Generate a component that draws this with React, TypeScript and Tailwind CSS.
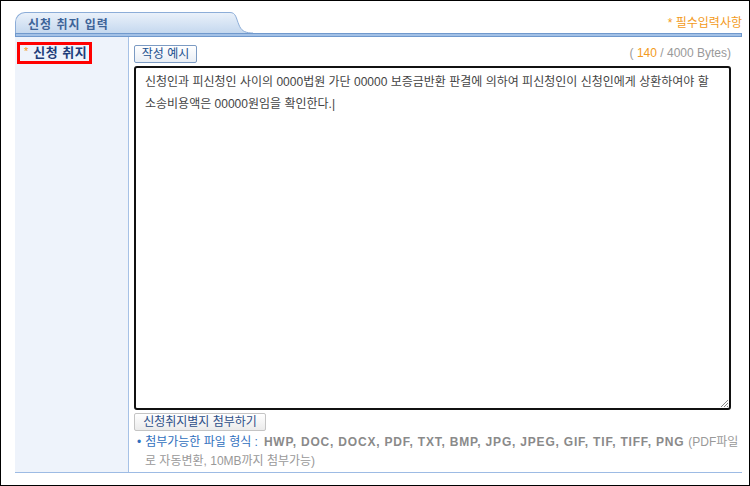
import React from "react";

const font = { fontFamily: '"Liberation Sans", "Noto Sans CJK KR", sans-serif' } as React.CSSProperties;

export default function App() {
  return (
    <div
      className="w-[750px] h-[486px] border border-black bg-white flex flex-col pl-[14px] pr-[7px] text-[12px]"
      style={font}
    >
      {/* header */}
      <div className="relative h-[36px] shrink-0">
        <div className="absolute left-0 top-[11px] flex">
          <div className="w-[208px] h-[22px] rounded-tl-[10px] border-t border-l border-[#8cadd8] bg-gradient-to-b from-[#eaf1fa] to-[#c3d7ee] flex items-center pl-[12px] pt-[2px]">
            <span className="font-bold text-[#3d6398] tracking-[1px]">신청 취지 입력</span>
          </div>
          <svg width="30" height="22" viewBox="0 0 30 22" className="block">
            <defs>
              <linearGradient id="tg" x1="0" y1="0" x2="0" y2="1">
                <stop offset="0" stopColor="#eaf1fa" />
                <stop offset="1" stopColor="#c3d7ee" />
              </linearGradient>
            </defs>
            <path d="M0 0.5 H7 C13 0.5 13 6 16 13 C18 18 21 20.5 28 21 H30 V22 H0 Z" fill="url(#tg)" />
            <path d="M0 0.5 H7 C13 0.5 13 6 16 13 C18 18 21 20.5 28 21 H30" fill="none" stroke="#8cadd8" strokeWidth="1" />
          </svg>
        </div>
        <div className="absolute right-0 top-[13px] text-[#f39a21] text-[12px]">* 필수입력사항</div>
        <div className="absolute left-0 right-0 bottom-0 h-[4px] bg-[#a3c1e6] border border-[#7099cd]" />
      </div>

      {/* body */}
      <div className="flex h-[436px] border-b border-[#9dbbe4] shrink-0">
        <div className="w-[114px] shrink-0 bg-[#eef3fb] border-r border-[#a6c1e6] pt-[5px] pl-[2px]">
          <div className="w-[75px] h-[22px] border-[3px] border-[#ff0000] flex items-center pl-[4px]">
            <span className="text-[#f39a21] text-[11px] mr-[5px] -mt-[3px]">*</span>
            <span className="font-bold text-[#1f3d7a] text-[13px] tracking-[0.5px]">신청 취지</span>
          </div>
        </div>
        <div className="flex-1 min-w-0 pl-[5px] pr-[11px] pt-[8px] flex flex-col">
          <div className="flex items-end justify-between h-[18px]">
            <button className="h-[18px] w-[63px] border border-[#7c9bc3] rounded-[2px] bg-gradient-to-b from-white to-[#e9eef5] text-[#21508f] text-[12px] leading-none">
              작성 예시
            </button>
            <div className="text-[#999] text-[12px] mb-[1px]">
              ( <span className="text-[#f39a21]">140</span> / 4000 Bytes)
            </div>
          </div>
          <div className="relative mt-[3px] h-[344px] border-2 border-[#111] rounded-[3px] px-[9px] pt-[3px] text-[#444] text-[12px] leading-[22px] whitespace-nowrap">
            신청인과 피신청인 사이의 0000법원 가단 00000 보증금반환 판결에 의하여 피신청인이 신청인에게 상환하여야 할
            <br />
            소송비용액은 00000원임을 확인한다.|
            <svg width="10" height="10" className="absolute right-0 bottom-0" viewBox="0 0 10 10">
              <path d="M9 2 L2 9 M9 5 L5 9 M9 8 L8 9" stroke="#888" strokeWidth="1" />
            </svg>
          </div>
          <button className="mt-[3px] self-start h-[18px] w-[132px] border border-[#c4c4c4] rounded-[2px] bg-gradient-to-b from-white to-[#ebebeb] text-[#2d4f88] text-[12px] leading-none">
            신청취지별지 첨부하기
          </button>
          <div className="mt-[2px] pl-[3px] leading-[19px] text-[12px] text-[#999] whitespace-nowrap">
            <div className="flex items-baseline">
              <span className="text-[#2f6fbd] mr-[1px]">•</span>
              <span className="text-[#2f6fbd] ml-[3px]">첨부가능한 파일 형식 :</span>
              <span className="font-bold text-[#8a8a8a] ml-[6px] tracking-[0.8px]">
                HWP, DOC, DOCX, PDF, TXT, BMP, JPG, JPEG, GIF, TIF, TIFF, PNG
              </span>
              <span className="ml-[4px]">(PDF파일</span>
            </div>
            <div className="pl-[8px]">로 자동변환, 10MB까지 첨부가능)</div>
          </div>
        </div>
      </div>
    </div>
  );
}
